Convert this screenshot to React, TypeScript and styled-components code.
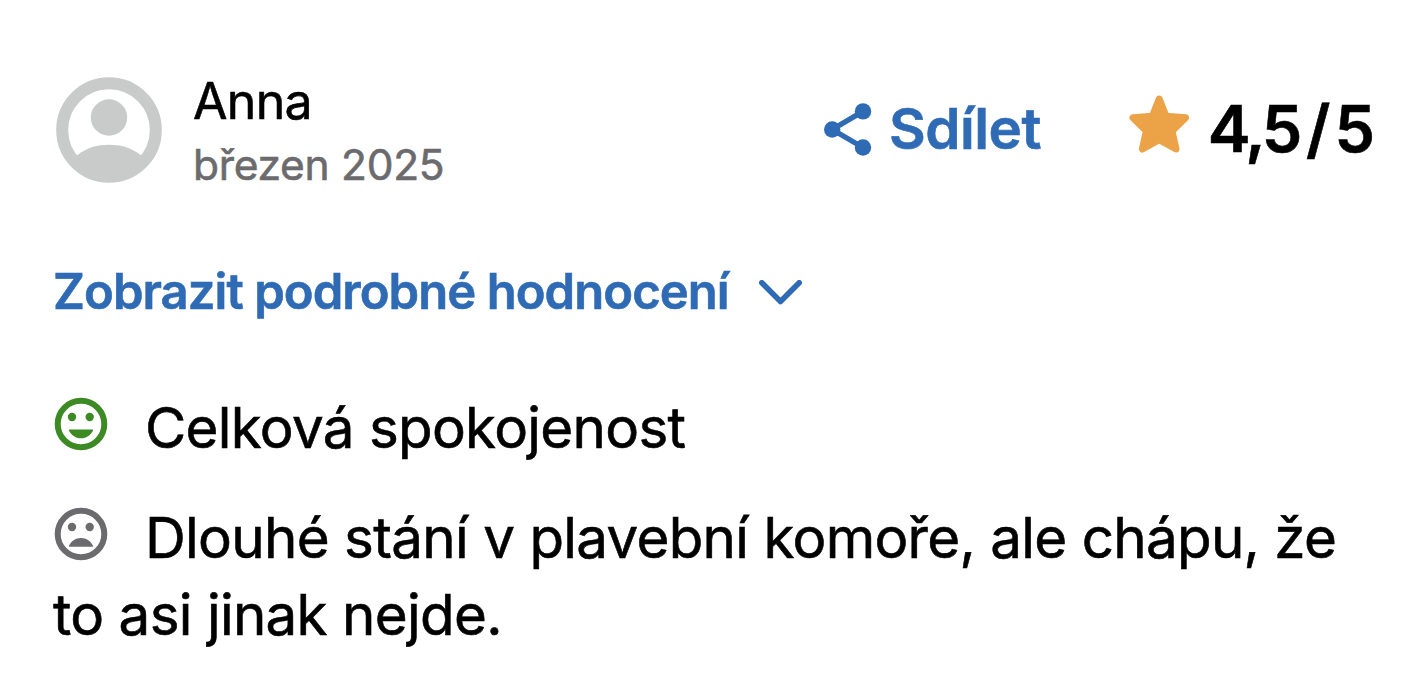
import React from 'react';

import styled, { createGlobalStyle } from 'styled-components';

const GlobalStyle = createGlobalStyle`
  * {
    box-sizing: border-box;
  }

  body {
    margin: 0;
    background: #fff;
    color: #000;
    font-family: Inter, sans-serif;
    -webkit-text-stroke: 0.6px currentColor;
  }
`;

const Review = styled.article`
  height: 682px;
  padding: 75px 51px 0 53px;
  overflow: hidden;
`;

const Header = styled.header`
  display: flex;
  height: 108px;
`;

const Avatar = styled.svg`
  display: block;
  width: 106px;
  height: 106px;
  margin: 2px 31px 0 3px;
`;

const Author = styled.div`
  flex: 1;
`;

const Name = styled.div`
  font-size: 50px;
  line-height: 52px;
  letter-spacing: -0.7px;
`;

const Visited = styled.div`
  margin-top: 10px;
  color: #6b6b6d;
  font-size: 42.5px;
  line-height: 56px;
  letter-spacing: -0.3px;
`;

const Share = styled.a`
  display: flex;
  align-items: center;
  color: #2f6bb5;
  font-size: 56.5px;
  font-weight: 600;
  line-height: 64px;
  letter-spacing: -0.5px;
`;

const ShareIcon = styled.svg`
  width: 48px;
  height: 53px;
  margin-right: 17px;
`;

const Rating = styled.div`
  display: flex;
  align-items: center;
  margin-left: 88px;
  font-size: 64.5px;
  font-weight: 600;
`;

const Score = styled.span`
  letter-spacing: -3.4px;
`;

const Slash = styled.span`
  margin: 0 4px 0 7px;
`;

const Star = styled.svg`
  width: 61px;
  height: 58px;
  margin: -10px 18px 0 0;
`;

const Toggle = styled.a`
  display: flex;
  align-items: center;
  margin-top: 79px;
  color: #2f6bb5;
  font-size: 49px;
  font-weight: 600;
  line-height: 60px;
  letter-spacing: -0.95px;
`;

const Chevron = styled.svg`
  width: 43px;
  height: 25px;
  margin-left: 30px;
`;

const Comment = styled.p<{ $top: number }>`
  margin: ${(p) => p.$top}px 0 0;
  font-size: 56.5px;
  line-height: 77px;
  letter-spacing: -0.7px;
`;

const Face = styled.svg`
  width: 54px;
  height: 54px;
  margin: 0 37px -3px 1px;
`;

function FaceIcon({ color, happy }: { color: string; happy?: boolean }) {
  return (
    <Face viewBox="0 0 54 54" fill={color}>
      <circle cx="27" cy="27" r="23.300" fill="none" stroke={color} strokeWidth="6" />
      <circle cx="18" cy="20" r="4.200" />
      <circle cx="35.700" cy="20" r="4.200" />
      {happy ? (
        <path d="M15.500 32.500h23q1 0 .5 1c-2 4.500-6.500 7.800-12 7.800s-10-3.300-12-7.800q-.5-1 .5-1z" />
      ) : (
        <path d="M15.500 39.700h23q1 0 .5-1c-2-4.500-6.500-7.800-12-7.800s-10 3.300-12 7.800q-.5 1 .5 1z" />
      )}
    </Face>
  );
}

function App() {
  return (
    <>
      <GlobalStyle />
      <Review>
        <Header>
          <Avatar viewBox="0 0 106 106" fill="#c9caca">
            <circle cx="53" cy="53" r="46.800" fill="none" stroke="#c9caca" strokeWidth="12" />
            <circle cx="53" cy="40.500" r="18.200" />
            <path d="M18 81c9-9 21-13.300 35-13.300S79 72 88 81L78 96H28z" />
          </Avatar>
          <Author>
            <Name>Anna</Name>
            <Visited>březen 2025</Visited>
          </Author>
          <Share>
            <ShareIcon viewBox="0 0 48 53" fill="currentColor">
              <path d="M39 8.400 8.200 26.500 39 44.500" fill="none" stroke="currentColor" strokeWidth="5.300" />
              <circle cx="39" cy="8.400" r="8.200" />
              <circle cx="8.200" cy="26.500" r="8.200" />
              <circle cx="39" cy="44.500" r="8.200" />
            </ShareIcon>
            <span>Sdílet</span>
          </Share>
          <Rating>
            <Star viewBox="0 0 61 58" fill="#eca246" stroke="#eca246" strokeWidth="7" strokeLinejoin="round">
              <path d="M30.200 4 37 21.300l19.500 1.500L43 36l4 18-16.800-9.300L13.400 54l4-18L4 22.800l19.400-1.500z" />
            </Star>
            <Score>4,5</Score>
            <Slash>/</Slash>
            <span>5</span>
          </Rating>
        </Header>
        <Toggle>
          <span>Zobrazit podrobné hodnocení</span>
          <Chevron
            viewBox="0 0 43 25"
            fill="none"
            stroke="currentColor"
            strokeWidth="5.600"
            strokeLinecap="round"
            strokeLinejoin="round"
          >
            <path d="m2.800 2.800 18.700 18.700L40.200 2.800" />
          </Chevron>
        </Toggle>
        <Comment $top={67}>
          <FaceIcon color="#3d8a24" happy />
          Celková spokojenost
        </Comment>
        <Comment $top={33}>
          <FaceIcon color="#6b6b6d" />
          Dlouhé stání v plavební komoře, ale chápu, že to asi jinak nejde.
        </Comment>
      </Review>
    </>
  );
}

export default App;
